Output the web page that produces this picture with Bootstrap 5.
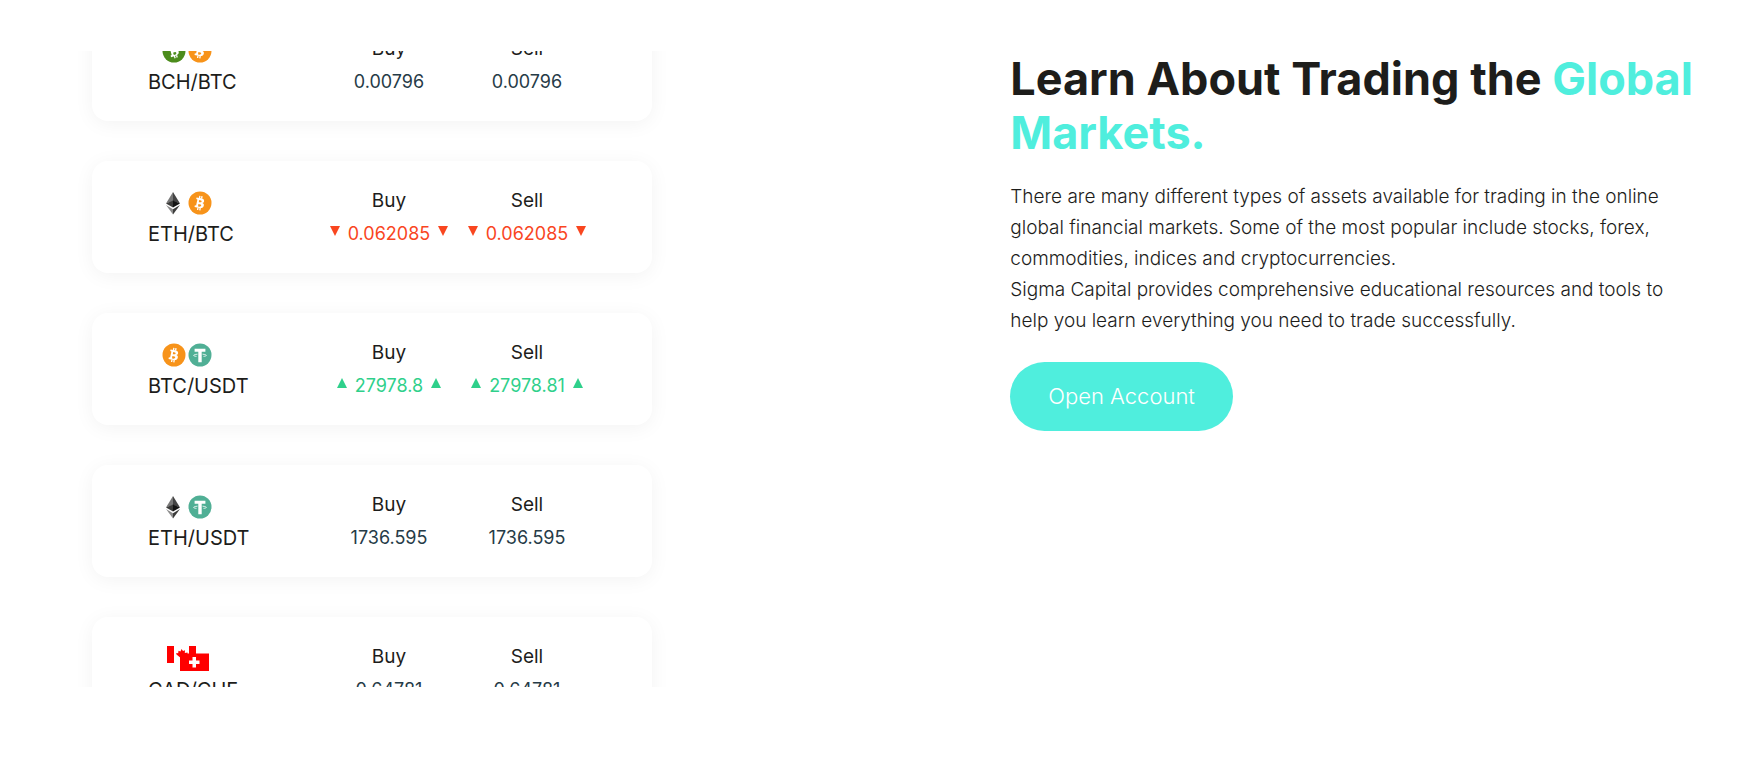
<!DOCTYPE html>
<html lang="en">
<head>
<meta charset="utf-8">
<meta name="viewport" content="width=device-width, initial-scale=1">
<title>Sigma Capital</title>
<link rel="stylesheet" href="https://cdn.jsdelivr.net/npm/bootstrap@5.3.0/dist/css/bootstrap.min.css">
<style>
  body { font-family: Inter, "Liberation Sans", sans-serif; color: #1d1d1b; background: #fff; }
  .learn-grid { display: grid; grid-template-columns: 57fr 41fr; padding-top: 51px; }
  .ticker { height: 636px; max-width: 592px; margin-left: 76px; padding: 0 16px; overflow: hidden; gap: 40px; }
  .quote { display: grid; grid-template-columns: 172px 1fr 1fr; flex: none; padding: 24px 56px 23px; border-radius: 16px;
    background: #fff; box-shadow: 0 3px 20px rgba(0,0,0,.05); font-size: 19px; line-height: 32px; }
  .coins { height: 33px; padding: 3px 0 0 14px; gap: 2px; }
  .coins.flags { padding-top: 0; }
  .pair-name { font-size: 20px; }
  .side-name { margin-bottom: 1px; }
  .amount { color: #263b47; font-size: 18px; }
  .amount.down { color: #f9461f; }
  .amount.up { color: #2fd08b; }
  .tick { margin-bottom: 6px; }
  .intro { padding-right: 28px; }
  .intro h2 { font-size: 45px; line-height: 54px; font-weight: 700; margin: 0 0 21px; padding-top: 1px; }
  .intro h2 span { color: #4feedd; }
  .intro p { font-size: 19px; line-height: 31px; font-weight: 300; margin: 0 0 26px; }
  .open-btn { padding: 18px 38px; font-size: 22px; line-height: 33px; font-weight: 300; border: 0;
    --bs-btn-bg: #4feedd; --bs-btn-color: #fff; --bs-btn-hover-bg: #35d8c7; --bs-btn-hover-color: #fff; }
</style>
</head>
<body>
<svg width="0" height="0" class="d-block" aria-hidden="true">
  <defs>
    <symbol id="bsign" viewBox="0 0 24 24">
      <path d="M8.6 6.4l4.6.8c2 .4 3.2 1.400 2.900 3-.2 1-.8 1.600-1.700 1.800 1.200.5 1.700 1.400 1.400 2.700-.4 2-2.100 2.600-4.500 2.200l-4.800-.8.4-1.800 1.200.1L9.400 8.400l-1.200-.3zM11.200 9l-.4 2.200c1.300.3 2.600.3 2.800-.7.200-1.100-1.100-1.300-2.400-1.500zm-.8 4l-.4 2.500c1.500.3 3 .3 3.200-.9.200-1.200-1.300-1.400-2.800-1.600z" fill="#fff" fill-rule="evenodd"/>
      <path d="M11.500 7.200l.4-2.400M13.600 7.600l.4-2.400M9.600 19l.4-2.400M11.800 19.300l.4-2.400" stroke="#fff" stroke-width="1.300"/>
    </symbol>
    <symbol id="btc" viewBox="0 0 24 24"><circle cx="12" cy="12" r="11.500" fill="#f7931a"/><use href="#bsign"/></symbol>
    <symbol id="bch" viewBox="0 0 24 24"><circle cx="12" cy="12" r="11.500" fill="#4c8c1c"/><use href="#bsign" transform="rotate(-28 12 12)"/></symbol>
    <symbol id="eth" viewBox="0 0 24 24">
      <path d="M11 1L4 12.500 11 10z" fill="#777"/><path d="M11 1l7 11.500L11 10z" fill="#444"/>
      <path d="M11 9.500l-7 3 7 4z" fill="#3c3c3b"/><path d="M11 9.500l7 3-7 4z" fill="#141414"/>
      <path d="M4 14l7 4.200V23.500z" fill="#8c8c8c"/><path d="M18 14l-7 4.200V23.500z" fill="#3c3c3b"/>
    </symbol>
    <symbol id="usdt" viewBox="0 0 24 24"><circle cx="12" cy="12" r="11.500" fill="#50af95"/>
      <path d="M6.600 5.800h10.800v2.900h-3.700v10.500h-3.400V8.700H6.600z" fill="#fff"/>
      <path d="M9.500 11.200c-5 .4-5 1.800-1 2.200M14.500 11.200c5 .4 5 1.800 1 2.200" fill="none" stroke="#fff" stroke-width=".8"/>
    </symbol>
    <symbol id="cadchf" viewBox="0 0 44 26">
      <path d="M1 1h7v17H1zM23 1h7v17h-7z" fill="#f00"/>
      <path d="M15.500 4l1.500 2 2-.8-.2 2.800 2.700-.5v5h-5l-.5 1.500-5.500-4.500-.3-1.500 2 .2.300-2.500 2 .8z" fill="#f00"/>
      <path d="M14 8.500h29V26H14z" fill="#f00"/>
      <path d="M26.500 12h3.500v3.500h3.500V19H30v3.500h-3.500V19H23v-3.500h3.500z" fill="#fff"/>
    </symbol>
    <symbol id="falling" viewBox="0 0 10 10"><path d="M0 0h10L5 10z" fill="currentColor"/></symbol>
    <symbol id="rising" viewBox="0 0 10 10"><path d="M0 10h10L5 0z" fill="currentColor"/></symbol>
  </defs>
</svg>
<main class="learn-grid">
  <section>
    <ul class="ticker list-unstyled d-flex flex-column justify-content-center mb-0">
      <li class="quote">
        <div><div class="coins d-flex align-items-center"><svg width="24" height="24"><use href="#bch"/></svg><svg width="24" height="24"><use href="#btc"/></svg></div><div class="pair-name">BCH/BTC</div></div>
        <div class="text-center"><div class="side-name">Buy</div><div class="amount">0.00796</div></div>
        <div class="text-center"><div class="side-name">Sell</div><div class="amount">0.00796</div></div>
      </li>
      <li class="quote">
        <div><div class="coins d-flex align-items-center"><svg width="24" height="24"><use href="#eth"/></svg><svg width="24" height="24"><use href="#btc"/></svg></div><div class="pair-name">ETH/BTC</div></div>
        <div class="text-center"><div class="side-name">Buy</div><div class="amount down d-flex justify-content-center align-items-center gap-2"><svg class="tick" width="10" height="10"><use href="#falling"/></svg>0.062085<svg class="tick" width="10" height="10"><use href="#falling"/></svg></div></div>
        <div class="text-center"><div class="side-name">Sell</div><div class="amount down d-flex justify-content-center align-items-center gap-2"><svg class="tick" width="10" height="10"><use href="#falling"/></svg>0.062085<svg class="tick" width="10" height="10"><use href="#falling"/></svg></div></div>
      </li>
      <li class="quote">
        <div><div class="coins d-flex align-items-center"><svg width="24" height="24"><use href="#btc"/></svg><svg width="24" height="24"><use href="#usdt"/></svg></div><div class="pair-name">BTC/USDT</div></div>
        <div class="text-center"><div class="side-name">Buy</div><div class="amount up d-flex justify-content-center align-items-center gap-2"><svg class="tick" width="10" height="10"><use href="#rising"/></svg>27978.8<svg class="tick" width="10" height="10"><use href="#rising"/></svg></div></div>
        <div class="text-center"><div class="side-name">Sell</div><div class="amount up d-flex justify-content-center align-items-center gap-2"><svg class="tick" width="10" height="10"><use href="#rising"/></svg>27978.81<svg class="tick" width="10" height="10"><use href="#rising"/></svg></div></div>
      </li>
      <li class="quote">
        <div><div class="coins d-flex align-items-center"><svg width="24" height="24"><use href="#eth"/></svg><svg width="24" height="24"><use href="#usdt"/></svg></div><div class="pair-name">ETH/USDT</div></div>
        <div class="text-center"><div class="side-name">Buy</div><div class="amount">1736.595</div></div>
        <div class="text-center"><div class="side-name">Sell</div><div class="amount">1736.595</div></div>
      </li>
      <li class="quote">
        <div><div class="coins flags d-flex align-items-center"><svg class="ms-1" width="44" height="26"><use href="#cadchf"/></svg></div><div class="pair-name">CAD/CHF</div></div>
        <div class="text-center"><div class="side-name">Buy</div><div class="amount">0.64781</div></div>
        <div class="text-center"><div class="side-name">Sell</div><div class="amount">0.64781</div></div>
      </li>
    </ul>
  </section>
  <section class="intro">
    <h2>Learn About Trading the <span>Global Markets.</span></h2>
    <p>There are many different types of assets available for trading in the online<br>global financial markets. Some of the most popular include stocks, forex,<br>commodities, indices and cryptocurrencies.<br>Sigma Capital provides comprehensive educational resources and tools to<br>help you learn everything you need to trade successfully.</p>
    <button type="button" class="btn rounded-pill open-btn">Open Account</button>
  </section>
</main>
<script src="https://cdn.jsdelivr.net/npm/bootstrap@5.3.0/dist/js/bootstrap.bundle.min.js"></script>
</body>
</html>
